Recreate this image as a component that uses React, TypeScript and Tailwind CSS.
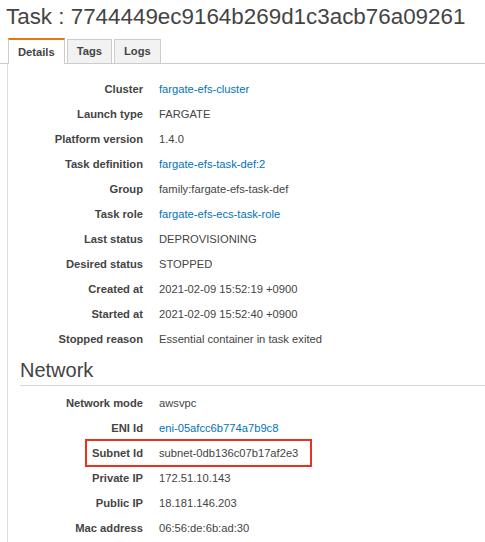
import React from "react";

type Row = { label: string; value: string; link?: boolean; highlight?: boolean };

const details: Row[] = [
  { label: "Cluster", value: "fargate-efs-cluster", link: true },
  { label: "Launch type", value: "FARGATE" },
  { label: "Platform version", value: "1.4.0" },
  { label: "Task definition", value: "fargate-efs-task-def:2", link: true },
  { label: "Group", value: "family:fargate-efs-task-def" },
  { label: "Task role", value: "fargate-efs-ecs-task-role", link: true },
  { label: "Last status", value: "DEPROVISIONING" },
  { label: "Desired status", value: "STOPPED" },
  { label: "Created at", value: "2021-02-09 15:52:19 +0900" },
  { label: "Started at", value: "2021-02-09 15:52:40 +0900" },
  { label: "Stopped reason", value: "Essential container in task exited" },
];

const network: Row[] = [
  { label: "Network mode", value: "awsvpc" },
  { label: "ENI Id", value: "eni-05afcc6b774a7b9c8", link: true },
  { label: "Subnet Id", value: "subnet-0db136c07b17af2e3", highlight: true },
  { label: "Private IP", value: "172.51.10.143" },
  { label: "Public IP", value: "18.181.146.203" },
  { label: "Mac address", value: "06:56:de:6b:ad:30" },
];

function DetailRow({ row }: { row: Row }) {
  return (
    <div className="relative flex h-[25px] items-center text-[11.2px]">
      <div className="w-[135px] shrink-0 text-right font-bold text-[#444]">{row.label}</div>
      <div className={"ml-[16px] whitespace-nowrap " + (row.link ? "text-[#0073bb]" : "text-[#444]")}>
        {row.value}
      </div>
      {row.highlight && (
        <span className="pointer-events-none absolute left-[77px] top-[-2px] h-[28px] w-[227px] border-2 border-[#e8321d]" />
      )}
    </div>
  );
}

export default function App() {
  return (
    <div className="h-[542px] w-[485px] overflow-hidden bg-white font-['Liberation_Sans',Arial,sans-serif]">
      <h1 className="pl-[6px] pt-[3px] text-[22.4px] leading-[28px] text-[#444] whitespace-nowrap">
        Task : 7744449ec9164b269d1c3acb76a09261
      </h1>
      <div className="mt-[7px] flex h-[26px] items-end border-b border-[#cccccc] pl-[8px]">
        <div className="relative -mb-px flex h-[26px] items-center border-x border-t-2 border-x-[#cccccc] border-t-[#e47911] bg-white px-[9px] text-[11.2px] font-bold text-[#444]">
          Details
        </div>
        <div className="ml-[2px] flex h-[24px] items-center border border-b-0 border-[#cccccc] bg-[#f2f2f2] px-[9px] text-[11.2px] font-bold text-[#444]">
          Tags
        </div>
        <div className="ml-[2px] flex h-[24px] items-center border border-b-0 border-[#cccccc] bg-[#f2f2f2] px-[9px] text-[11.2px] font-bold text-[#444]">
          Logs
        </div>
      </div>
      <div className="ml-[7px] border-l border-[#dddddd] pt-[13px] pb-[20px]">
        {details.map((r) => (
          <DetailRow key={r.label} row={r} />
        ))}
        <div className="ml-[12px] mt-[6px] border-b border-[#d5d5d5] pb-[3px] text-[20px] leading-[24px] text-[#444]">
          Network
        </div>
        <div className="pt-[5px]">
          {network.map((r) => (
            <DetailRow key={r.label} row={r} />
          ))}
        </div>
      </div>
    </div>
  );
}
